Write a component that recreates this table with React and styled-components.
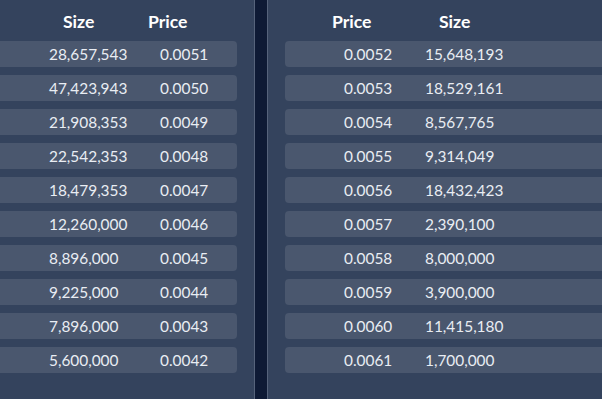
import React from 'react';
import styled, { createGlobalStyle } from 'styled-components';

const GlobalStyle = createGlobalStyle`
  html, body {
    margin: 0;
    padding: 0;
    background: #34435d;
    font-family: Lato, "Open Sans", sans-serif;
  }
`;

const Board = styled.div`
  display: flex;
  width: 602px;
  height: 399px;
  overflow: hidden;
  background: #34435d;
`;

const Panel = styled.div`
  display: flex;
  flex-direction: column;
  box-sizing: border-box;
  width: ${props => (props.side === 'bids' ? '255px' : 'auto')};
  flex: ${props => (props.side === 'bids' ? '0 0 auto' : '1')};
  padding: ${props => (props.side === 'bids' ? '0 17px 0 0' : '0 0 0 17px')};
  border-right: ${props => (props.side === 'bids' ? '1px solid #56637b' : 'none')};
  border-left: ${props => (props.side === 'asks' ? '1px solid #56637b' : 'none')};
`;

const Divider = styled.div`
  width: 12px;
  flex: 0 0 12px;
  background: #0e1a35;
`;

const Header = styled.div`
  display: flex;
  height: 41px;
  box-sizing: border-box;
  padding-top: 2px;
  padding-left: ${props => props.indent}px;
  line-height: 40px;
  font-size: 17.6px;
  font-weight: 700;
  color: #ffffff;
`;

const HeadCell = styled.div`
  width: ${props => (props.width ? `${props.width}px` : 'auto')};
`;

const Rows = styled.div`
  display: flex;
  flex-direction: column;
  gap: 8px;
`;

const Row = styled.div`
  display: flex;
  height: 26px;
  line-height: 26px;
  background: #4a576e;
  border-radius: ${props => (props.side === 'bids' ? '0 4px 4px 0' : '4px 0 0 4px')};
  font-size: 15.4px;
  color: #e9edf3;
  padding-left: ${props => props.indent}px;
`;

const Cell = styled.div`
  width: ${props => props.width}px;
`;

const bids = [
  ['28,657,543', '0.0051'],
  ['47,423,943', '0.0050'],
  ['21,908,353', '0.0049'],
  ['22,542,353', '0.0048'],
  ['18,479,353', '0.0047'],
  ['12,260,000', '0.0046'],
  ['8,896,000', '0.0045'],
  ['9,225,000', '0.0044'],
  ['7,896,000', '0.0043'],
  ['5,600,000', '0.0042'],
];

const asks = [
  ['0.0052', '15,648,193'],
  ['0.0053', '18,529,161'],
  ['0.0054', '8,567,765'],
  ['0.0055', '9,314,049'],
  ['0.0056', '18,432,423'],
  ['0.0057', '2,390,100'],
  ['0.0058', '8,000,000'],
  ['0.0059', '3,900,000'],
  ['0.0060', '11,415,180'],
  ['0.0061', '1,700,000'],
];

const App = () => (
  <>
    <GlobalStyle />
    <Board>
      <Panel side="bids">
        <Header indent={63}>
          <HeadCell width={85}>Size</HeadCell>
          <HeadCell>Price</HeadCell>
        </Header>
        <Rows>
          {bids.map(([size, price]) => (
            <Row key={price} side="bids" indent={49}>
              <Cell width={111}>{size}</Cell>
              <Cell width={70}>{price}</Cell>
            </Row>
          ))}
        </Rows>
      </Panel>
      <Divider />
      <Panel side="asks">
        <Header indent={47}>
          <HeadCell width={107}>Price</HeadCell>
          <HeadCell>Size</HeadCell>
        </Header>
        <Rows>
          {asks.map(([price, size]) => (
            <Row key={price} side="asks" indent={59}>
              <Cell width={81}>{price}</Cell>
              <Cell width={120}>{size}</Cell>
            </Row>
          ))}
        </Rows>
      </Panel>
    </Board>
  </>
);

export default App;
